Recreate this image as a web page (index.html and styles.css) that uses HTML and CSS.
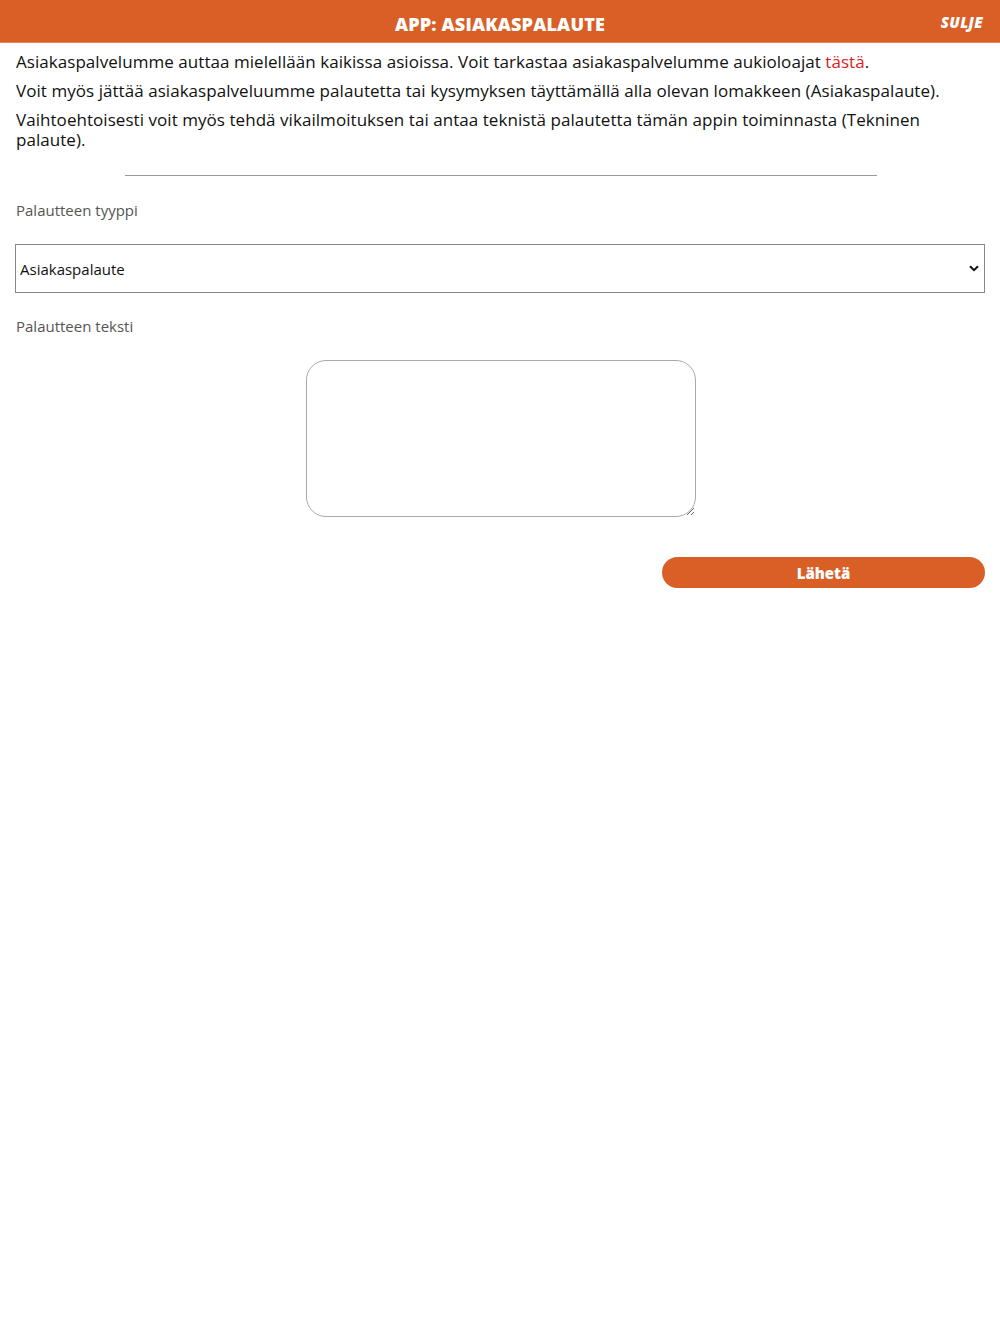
FILE: index.html
```html
<!DOCTYPE html>
<html lang="fi">
<head>
  <meta charset="UTF-8" />
  <meta name="viewport" content="width=device-width, initial-scale=1.0"/>
  <title>APP: Asiakaspalaute</title>
  <link rel="stylesheet" href="styles.css">
</head>
<body>

  <div class="topbar">
    <div class="topbar-title">APP: ASIAKASPALAUTE</div>
    <a href="#" class="close-link">SULJE</a>
  </div>

  <div class="content">
    <p class="info">Asiakaspalvelumme auttaa mielellään kaikissa asioissa. Voit tarkastaa asiakaspalvelumme aukioloajat <a href="#" class="red-link">tästä</a>.</p>
    <p class="info">Voit myös jättää asiakaspalveluumme palautetta tai kysymyksen täyttämällä alla olevan lomakkeen (Asiakaspalaute).</p>
    <p class="info">Vaihtoehtoisesti voit myös tehdä vikailmoituksen tai antaa teknistä palautetta tämän appin toiminnasta (Tekninen palaute).</p>

    <hr class="divider">

    <form class="feedback-form">
      <label class="field-label" for="type">Palautteen tyyppi</label>
      <div class="select-wrap">
        <select id="type" class="type-select">
          <option>Asiakaspalaute</option>
          <option>Tekninen palaute</option>
        </select>
        <svg class="select-arrow" width="10" height="7" viewBox="0 0 10 7"><path d="M1 1.2 L5 5.2 L9 1.2" fill="none" stroke="#111" stroke-width="2"/></svg>
      </div>

      <label class="field-label label-text" for="msg">Palautteen teksti</label>
      <div class="textarea-row">
        <textarea id="msg" class="msg-box"></textarea>
      </div>

      <div class="submit-row">
        <button type="button" class="send-btn">Lähetä</button>
      </div>
    </form>
  </div>

</body>
</html>
```

FILE: styles.css
```css
html, body {
  margin: 0;
  padding: 0;
  background: white;
  font-family: "Open Sans", Arial, sans-serif;
  color: #111;
}

.topbar {
  position: relative;
  height: 42px;
  background-color: #d95f27;
  border-bottom: 1px solid #e8845a;
  display: flex;
  justify-content: center;
  align-items: center;
}

.topbar-title {
  color: white;
  font-weight: 800;
  font-size: 18px;
  letter-spacing: 0.2px;
  padding-top: 6px;
}

.close-link {
  position: absolute;
  right: 17px;
  top: 12px;
  color: white;
  font-weight: 800;
  font-style: italic;
  font-size: 15px;
  letter-spacing: 0.3px;
  text-decoration: none;
}

.content {
  padding: 0 15px 0 16px;
}

.info {
  margin: 9px 0 0;
  font-size: 17px;
  line-height: 20px;
  color: #111;
  letter-spacing: 0.05px;
}

.red-link {
  color: #e01b1b;
  text-decoration: none;
}

.divider {
  width: 752px;
  margin: 25px auto 0;
  border: none;
  border-top: 1px solid #999;
}

.feedback-form {
  display: flex;
  flex-direction: column;
}

.field-label {
  font-size: 15px;
  color: #555;
  margin-top: 24px;
  margin-bottom: 24px;
}

.label-text {
  margin-top: 23px;
}

.select-wrap {
  position: relative;
  margin-left: -1px;
}

.type-select {
  width: 100%;
  height: 49px;
  border: 1px solid #888;
  border-radius: 0;
  background: white;
  font-family: "Open Sans", Arial, sans-serif;
  font-size: 15px;
  color: #111;
  padding: 0 4px;
  appearance: none;
}

.select-arrow {
  position: absolute;
  right: 6px;
  top: 21px;
}

.textarea-row {
  display: flex;
  justify-content: center;
}

.msg-box {
  width: 390px;
  height: 157px;
  box-sizing: border-box;
  border: 1px solid #aaa;
  border-radius: 20px;
}

.submit-row {
  display: flex;
  justify-content: flex-end;
  margin-top: 40px;
}

.send-btn {
  width: 323px;
  height: 31px;
  border: none;
  border-radius: 16px;
  background-color: #d95f27;
  color: white;
  font-family: "Open Sans", Arial, sans-serif;
  font-weight: 800;
  font-size: 15px;
  cursor: pointer;
}
```
